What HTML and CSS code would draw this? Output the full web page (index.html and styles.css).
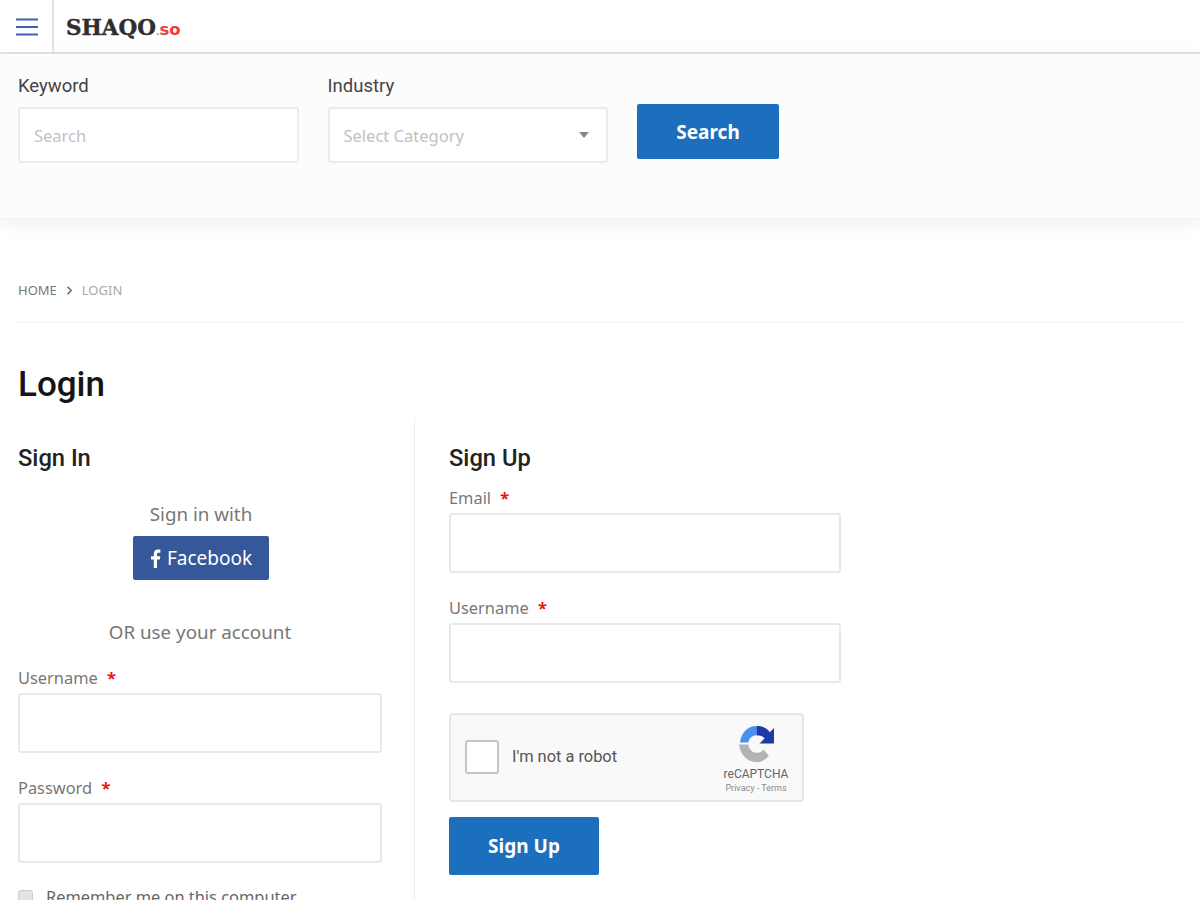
FILE: index.html
```html
<!DOCTYPE html>
<html lang="en">
<head>
<meta charset="utf-8">
<title>Login - Shaqo.so</title>
<link rel="stylesheet" href="styles.css">
</head>
<body>
<header class="topbar">
  <button class="menu-btn" aria-label="Menu">
    <svg width="22" height="18" viewBox="0 0 22 18"><path d="M0 1.5h22M0 9h22M0 16.5h22" stroke="#3f5fb0" stroke-width="2" fill="none"/></svg>
  </button>
  <a class="logo"><span class="logo-main">SHAQO</span><span class="logo-dot">.</span><span class="logo-so">so</span></a>
</header>
<section class="search-panel">
  <div class="field field-search">
    <label class="search-label">Keyword</label>
    <div class="search-input placeholder">Search</div>
  </div>
  <div class="field field-search">
    <label class="search-label">Industry</label>
    <div class="search-input placeholder select">Select Category<span class="caret"></span></div>
  </div>
  <button class="btn btn-search">Search</button>
</section>
<main class="content">
  <nav class="breadcrumb">
    <span class="crumb-home">HOME</span>
    <svg class="crumb-sep" width="7" height="9" viewBox="0 0 7 9"><path d="M1.5 .8 5.2 4.5 1.5 8.2" stroke="#666" stroke-width="1.5" fill="none"/></svg>
    <span class="crumb-cur">LOGIN</span>
  </nav>
  <h1 class="page-title">Login</h1>
  <div class="columns">
    <section class="col col-left">
      <h2 class="col-title">Sign In</h2>
      <p class="center-text with">Sign in with</p>
      <div class="center-row">
        <button class="btn-fb">
          <svg width="11" height="19" viewBox="0 0 11 19"><path d="M7 19V10.500h2.800l.5-3.300H7V5.300C7 4.300 7.400 3.700 8.700 3.700h1.700V.7C10 .6 9.100.5 8 .5 5.600.5 3.800 2 3.800 4.800v2.400H1v3.300h2.800V19z" fill="#fff"/></svg>
          <span>Facebook</span>
        </button>
      </div>
      <p class="center-text or">OR use your account</p>
      <div class="form-field">
        <label class="form-label">Username <span class="req">*</span></label>
        <div class="form-input"></div>
      </div>
      <div class="form-field">
        <label class="form-label">Password <span class="req">*</span></label>
        <div class="form-input"></div>
      </div>
      <div class="remember"><span class="check"></span><span>Remember me on this computer</span></div>
    </section>
    <section class="col col-right">
      <h2 class="col-title">Sign Up</h2>
      <div class="form-field first">
        <label class="form-label">Email <span class="req">*</span></label>
        <div class="form-input"></div>
      </div>
      <div class="form-field">
        <label class="form-label">Username <span class="req">*</span></label>
        <div class="form-input"></div>
      </div>
      <div class="captcha">
        <span class="captcha-box"></span>
        <span class="captcha-text">I'm not a robot</span>
        <div class="captcha-brand">
          <svg width="37" height="37" viewBox="0 0 36 36">
            <path d="M2 17C3 8 9 1 18 1V10C14 10 11 13 10 17Z" fill="#4a90f0"/>
            <path d="M18 1C24 1 28 3 31 7L35 3V18H21L26 13C24 11 21 10 18 10Z" fill="#1c3aa9"/>
            <path d="M1 19H10C11 24 14 27 18 27C21 27 23 26 25 24L30 30C27 34 23 36 18 36C9 36 2 29 1 19Z" fill="#b3b3b3"/>
          </svg>
          <span class="brand-name">reCAPTCHA</span>
          <span class="brand-links">Privacy - Terms</span>
        </div>
      </div>
      <button class="btn btn-signup">Sign Up</button>
    </section>
  </div>
</main>
</body>
</html>
```
FILE: styles.css
```css
html, body {
  margin: 0;
  height: 900px;
  overflow: hidden;
  background: #fff;
  font-family: "Noto Sans", "Open Sans", sans-serif;
  color: #666;
}
.topbar {
  display: flex;
  align-items: stretch;
  height: 52px;
  border-bottom: 2px solid #e3e3e3;
  background: #fff;
}
.menu-btn {
  width: 54px;
  padding: 1px 0 0 2px;
  border: 0;
  border-right: 2px solid #e3e3e3;
  background: #fff;
  display: flex;
  align-items: center;
  justify-content: center;
}
.logo {
  display: flex;
  align-items: baseline;
  padding: 14px 0 0 12px;
  line-height: 28px;
  font-family: "DejaVu Serif", serif;
  font-weight: 700;
}
.logo-main {
  font-size: 21.500px;
  color: #2e2e2e;
  -webkit-text-stroke: .4px #2e2e2e;
}
.logo-dot {
  font-size: 10px;
  color: #888;
}
.logo-so {
  font-family: "DejaVu Sans", sans-serif;
  font-size: 16.500px;
  color: #f0383f;
}
.search-panel {
  display: flex;
  align-items: flex-start;
  gap: 29px;
  height: 165px;
  box-sizing: border-box;
  padding: 22px 18px 0;
  background: #fcfcfc;
  box-shadow: 0 4px 18px rgba(0,0,0,.07);
  border-bottom: 1px solid #f3f3f3;
}
.field-search { width: 280.500px; }
.search-label {
  display: block;
  font-family: Roboto, sans-serif;
  font-size: 18.500px;
  line-height: 20px;
  color: #444;
  margin-bottom: 11px;
}
.search-input {
  height: 56px;
  box-sizing: border-box;
  padding: 0 14px;
  display: flex;
  align-items: center;
  justify-content: space-between;
  background: #fff;
  border: 2px solid #ebebeb;
  border-radius: 3px;
  font-size: 16.500px;
  color: #c2c2c2;
}
.caret {
  width: 0;
  height: 0;
  border-left: 5px solid transparent;
  border-right: 5px solid transparent;
  border-top: 6px solid #888;
  margin-right: 3px;
}
.btn {
  border: 0;
  border-radius: 2px;
  background: #1b6fbd;
  color: #fff;
  font-family: "Noto Sans", sans-serif;
  font-weight: 700;
  font-size: 19px;
  padding: 0;
}
.btn-search {
  width: 142px;
  height: 55px;
  margin-top: 28px;
}
.content { padding: 0 16px 0 18px; }
.breadcrumb {
  display: flex;
  align-items: center;
  gap: 9px;
  height: 104px;
  box-sizing: border-box;
  padding-top: 39px;
  border-bottom: 1px dotted #e4e4e4;
  font-size: 13px;
}
.crumb-home { color: #777; }
.crumb-cur { color: #aaa; }
.page-title {
  margin: 0;
  padding-top: 43px;
  font-family: Roboto, sans-serif;
  font-weight: 500;
  font-size: 35px;
  line-height: 38px;
  color: #151515;
}
.columns {
  display: flex;
  margin-top: 14px;
}
.col-left {
  width: 364px;
  padding-right: 32px;
  border-right: 1px solid #eee;
  height: 500px;
}
.col-right {
  width: 392px;
  padding-left: 34px;
}
.col-title {
  margin: 0;
  padding-top: 26px;
  font-family: Roboto, sans-serif;
  font-weight: 500;
  font-size: 23.700px;
  line-height: 28px;
  color: #222;
}
.center-text {
  margin: 0;
  text-align: center;
  font-size: 18.800px;
  line-height: 26px;
  color: #777;
}
.with { margin-top: 29px; padding-left: 2px; }
.or { margin-top: 39px; }
.center-row {
  display: flex;
  justify-content: center;
  margin-top: 9px;
  padding-left: 2px;
}
.btn-fb {
  display: flex;
  align-items: center;
  justify-content: center;
  gap: 6px;
  width: 136px;
  height: 44px;
  padding: 0;
  border: 0;
  border-radius: 2px;
  background: #36589b;
  color: #fff;
  font-family: "Noto Sans", sans-serif;
  font-size: 19px;
}
.form-field { margin-top: 25px; }
.col-left .or + .form-field { margin-top: 23px; }
.col-right .form-field.first { margin-top: 16px; }
.form-label {
  display: block;
  font-size: 16.400px;
  line-height: 20px;
  color: #777;
  margin-bottom: 5px;
}
.req {
  color: #f01010;
  margin-left: 5px;
  font-weight: 700;
}
.form-input {
  height: 60px;
  box-sizing: border-box;
  background: #fff;
  border: 2px solid #e9e9e9;
  border-radius: 3px;
}
.remember {
  display: flex;
  align-items: center;
  gap: 13px;
  margin-top: 24px;
  font-size: 16.400px;
  line-height: 20px;
  color: #666;
}
.check {
  width: 15px;
  height: 15px;
  box-sizing: border-box;
  background: #e4e4e4;
  border: 1px solid #ccc;
  border-radius: 3px;
}
.captcha {
  display: flex;
  align-items: center;
  width: 355px;
  height: 89px;
  box-sizing: border-box;
  margin-top: 30px;
  padding: 0 14px;
  background: #f9f9f9;
  border: 2px solid #e6e6e6;
  border-radius: 4px;
}
.captcha-box {
  width: 34px;
  height: 34px;
  box-sizing: border-box;
  background: #fff;
  border: 2px solid #c4c4c4;
  border-radius: 3px;
  margin: 0 13px 2px 0;
}
.captcha-text {
  flex: 1;
  font-family: Roboto, sans-serif;
  font-size: 16.400px;
  padding-bottom: 2px;
  color: #555;
}
.captcha-brand {
  display: flex;
  flex-direction: column;
  align-items: center;
  width: 64px;
  margin-top: 5px;
}
.brand-name {
  font-family: Roboto, sans-serif;
  font-size: 12px;
  line-height: 15px;
  margin-top: 5px;
  color: #666;
}
.brand-links {
  font-family: Roboto, sans-serif;
  font-size: 9px;
  line-height: 13px;
  color: #888;
}
.btn-signup {
  display: block;
  width: 150px;
  height: 58px;
  margin-top: 15px;
}
```
